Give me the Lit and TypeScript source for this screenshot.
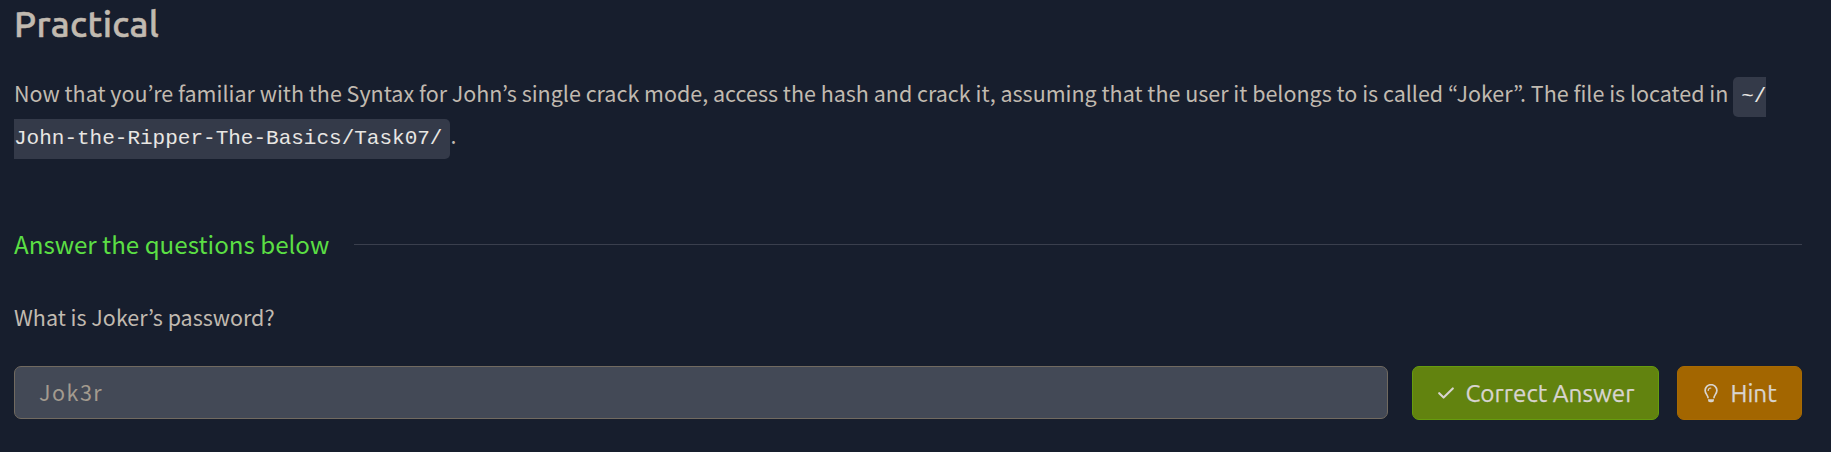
import { LitElement, html, css } from "lit";
import { customElement, property } from "lit/decorators.js";

@customElement("answer-row")
class AnswerRow extends LitElement {
  @property() answer = "";

  static styles = css`
    :host { display: flex; align-items: flex-start; }
    .field {
      flex: 1; box-sizing: border-box; height: 53px; min-width: 0;
      padding: 0 24px 2px; border: 1px solid #716a60; border-radius: 7px;
      background: #434956; color: #a39b8f;
      font: 21.5px/49px "Noto Sans CJK KR", "Noto Sans", sans-serif;
      letter-spacing: 1.5px;
    }
    .btn {
      display: flex; align-items: center; box-sizing: border-box; height: 54px;
      padding: 0; border: 1px solid; border-radius: 7px; color: #d8d4cf;
      font: 24.3px/52px Ubuntu, "Noto Sans", sans-serif; white-space: nowrap;
    }
    .btn span { padding-top: 1px; line-height: 51px; -webkit-text-stroke: 0.25px #d8d4cf; }
    .correct { width: 247px; margin-left: 24px; padding-left: 25px; gap: 11.5px; background: #62830f; border-color: #669c0e; }
    .hint { width: 125px; margin-left: 18px; padding-left: 26px; gap: 12.5px; background: #a36600; border-color: #a86a02; }
    svg { display: block; flex: none; }
  `;

  render() {
    return html`
      <input class="field" type="text" .value=${this.answer} readonly />
      <button class="btn correct">
        <svg width="16" height="14" viewBox="0 0 16 14" fill="none" stroke="currentColor" stroke-width="2.1" stroke-linecap="round" stroke-linejoin="round"><path d="M1.2 7.2 5.6 11.6 14.8 2.4" /></svg>
        <span>Correct Answer</span>
      </button>
      <button class="btn hint">
        <svg width="14" height="19" viewBox="0 0 14 19" fill="none" stroke="currentColor" stroke-width="1.7" stroke-linecap="round" stroke-linejoin="round">
          <path d="M4 13.6C4 11.2 1.1 9.8 1.1 6.6a5.9 5.9 0 0 1 11.8 0C12.9 9.8 10 11.2 10 13.6" />
          <path d="M4.2 6.5A2.7 2.7 0 0 1 6.8 4" stroke-width="1.2" />
          <path d="M4 15.3h6v.6a2.2 2.2 0 0 1-2.2 2.3H6.2A2.2 2.2 0 0 1 4 15.9z" fill="currentColor" stroke="none" />
        </svg>
        <span>Hint</span>
      </button>
    `;
  }
}

@customElement("app-root")
class AppRoot extends LitElement {
  static styles = css`
    :host {
      display: block; box-sizing: border-box; height: 452px; overflow: hidden;
      padding: 0 29px 0 14px; background: #171e2d; color: #c1bab0;
      font-family: "Noto Sans CJK KR", "Noto Sans", sans-serif;
    }
    .title { margin: 0; height: 72px; font: 500 36px/48px Ubuntu, "Noto Sans", sans-serif; letter-spacing: 0.35px; -webkit-text-stroke: 0.5px #c1bab0; }
    .text { margin: 0; font-size: 21.49px; line-height: 42px; }
    code {
      padding: 8px 8px 9px; border-radius: 5px; background: #343a49; color: #e8e6e3;
      font: 21px "Liberation Mono", monospace;
    }
    .section { display: flex; align-items: center; gap: 25px; margin-top: 68px; height: 40px; color: #5bdf44; font-size: 24.15px; line-height: 40px; }
    .section span { padding-bottom: 1px; }
    .rule { flex: 1; height: 1px; background: #3a3f4d; }
    .question { margin: 32px 0 0; height: 70px; font-size: 21.49px; line-height: 42px; }
  `;

  render() {
    return html`
      <h2 class="title">Practical</h2>
      <p class="text">Now that you’re familiar with the Syntax for John’s single crack mode, access the hash and crack it, assuming that the user it belongs to is called “Joker”. The file is located in <code>~/<wbr>John-the-Ripper-The-Basics/Task07/</code>.</p>
      <div class="section"><span>Answer the questions below</span><div class="rule"></div></div>
      <p class="question">What is Joker’s password?</p>
      <answer-row answer="Jok3r"></answer-row>
    `;
  }
}
